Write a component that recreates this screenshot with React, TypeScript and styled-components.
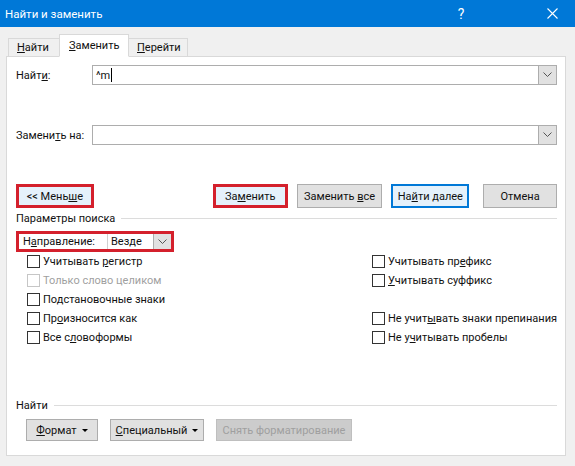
import React from 'react';
import styled, { createGlobalStyle } from 'styled-components';

const GlobalStyle = createGlobalStyle`
  html, body {
    margin: 0;
    padding: 0;
    background: #f0f0f0;
  }
  body {
    font-family: 'Segoe UI', Roboto, 'Noto Sans', sans-serif;
    font-size: 11px;
    color: #111;
  }
`;

const Window = styled.div`
  width: 575px;
  height: 466px;
  background: #f0f0f0;
  display: flex;
  flex-direction: column;
  overflow: hidden;
`;

const TitleBar = styled.div`
  height: 27px;
  background: #0078d7;
  color: #fff;
  display: flex;
  align-items: center;
  padding-left: 5px;
  font-size: 11.5px;
`;

const Title = styled.div`
  flex: 1;
`;

const TitleButton = styled.div<{ $gap?: number }>`
  width: 46px;
  height: 27px;
  display: flex;
  align-items: center;
  justify-content: center;
  font-size: 14px;
  color: #fff;
  margin-right: ${(p) => p.$gap ?? 0}px;
`;

const Body = styled.div`
  flex: 1;
  padding: 6px 9px 10px 6px;
  display: flex;
  flex-direction: column;
`;

const TabRow = styled.div`
  display: flex;
  align-items: flex-end;
  height: 23px;
  padding-left: 2px;
  position: relative;
  z-index: 1;
`;

const Tab = styled.div<{ $active?: boolean; $w: number }>`
  width: ${(p) => p.$w}px;
  height: ${(p) => (p.$active ? '23px' : '19px')};
  padding-left: ${(p) => (p.$active ? '9px' : '8px')};
  display: flex;
  align-items: center;
  border: 1px solid #d9d9d9;
  border-bottom: 1px solid ${(p) => (p.$active ? '#fff' : '#d9d9d9')};
  background: ${(p) => (p.$active ? '#fff' : '#f0f0f0')};
  margin-bottom: -1px;
  box-sizing: border-box;
  ${(p) => (p.$active ? 'margin: 0 -1px -1px -1px; position: relative;' : '')}
`;

const Panel = styled.div`
  flex: 1;
  background: #fff;
  border: 1px solid #d9d9d9;
  padding: 8px 8px 0 9px;
  display: flex;
  flex-direction: column;
`;

const FieldRow = styled.div<{ $top: number }>`
  display: flex;
  align-items: center;
  margin-top: ${(p) => p.$top}px;
  height: 20px;
`;

const FieldLabel = styled.div`
  width: 76px;
  white-space: nowrap;
`;

const Combo = styled.div`
  flex: 1;
  height: 20px;
  box-sizing: border-box;
  border: 1px solid #adadad;
  display: flex;
  align-items: stretch;
`;

const ComboText = styled.div`
  flex: 1;
  padding-left: 3px;
  display: flex;
  align-items: center;
`;

const Caret = styled.span`
  display: inline-block;
  width: 1px;
  height: 14px;
  background: #000;
  margin-left: 1px;
`;

const ComboArrow = styled.div`
  width: 17px;
  background: #e1e1e1;
  border-left: 1px solid #adadad;
  display: flex;
  align-items: center;
  justify-content: center;
`;

const ButtonRow = styled.div`
  display: flex;
  align-items: center;
  margin-top: 39px;
  height: 24px;
`;

const Button = styled.div<{ $w: number; $mark?: 'red' | 'blue'; $disabled?: boolean; $h?: number }>`
  width: ${(p) => p.$w}px;
  height: ${(p) => p.$h ?? 24}px;
  box-sizing: border-box;
  display: flex;
  align-items: center;
  justify-content: center;
  background: ${(p) =>
    p.$disabled ? '#cccccc' : p.$mark ? '#e5f1fb' : '#e1e1e1'};
  color: ${(p) => (p.$disabled ? '#9f9f9f' : '#111')};
  border: ${(p) =>
    p.$mark === 'red'
      ? '3px solid #d4202c'
      : p.$mark === 'blue'
      ? '2px solid #0078d7'
      : p.$disabled
      ? '1px solid #bfbfbf'
      : '1px solid #adadad'};
  white-space: nowrap;
`;

const Spacer = styled.div<{ $w: number }>`
  width: ${(p) => p.$w}px;
  flex: none;
`;

const SectionTitle = styled.div<{ $top: number }>`
  display: flex;
  align-items: center;
  margin-top: ${(p) => p.$top}px;
  height: 16px;
  &::after {
    content: '';
    flex: 1;
    height: 1px;
    background: #dcdcdc;
    margin-left: 6px;
  }
`;

const DirectionBox = styled.div`
  margin-top: 5px;
  width: 158px;
  height: 21px;
  box-sizing: border-box;
  border: 3px solid #d4202c;
  display: flex;
  align-items: center;
`;

const DirectionLabel = styled.div`
  width: 84px;
  padding-left: 4px;
  white-space: nowrap;
`;

const DirectionSelect = styled.div`
  flex: 1;
  height: 15px;
  display: flex;
  align-items: stretch;
  border-left: 1px solid #d0d0d0;
`;

const OptionsGrid = styled.div`
  margin-top: 0;
  display: grid;
  grid-template-columns: 345px 1fr;
  grid-auto-rows: 19px;
  padding-left: 11px;
`;

const Check = styled.div<{ $disabled?: boolean }>`
  display: flex;
  align-items: center;
  color: ${(p) => (p.$disabled ? '#9f9f9f' : '#111')};
  white-space: nowrap;
`;

const Box = styled.span<{ $disabled?: boolean }>`
  width: 13px;
  height: 13px;
  box-sizing: border-box;
  border: 1px solid ${(p) => (p.$disabled ? '#c6c6c6' : '#333')};
  background: #fff;
  margin-right: 3px;
  flex: none;
`;

const BottomRow = styled.div`
  display: flex;
  align-items: center;
  margin-top: 6px;
  padding-left: 10px;
  height: 22px;
`;

const SmallArrow = styled.span`
  display: inline-block;
  width: 0;
  height: 0;
  border-left: 3px solid transparent;
  border-right: 3px solid transparent;
  border-top: 3px solid #000;
  margin-left: 5px;
`;

const Chevron = () => (
  <svg width="9" height="6" viewBox="0 0 9 6">
    <path d="M0.5 0.5 L4.5 4.5 L8.5 0.5" fill="none" stroke="#555" strokeWidth="1" />
  </svg>
);

const CloseIcon = () => (
  <svg width="11" height="11" viewBox="0 0 11 11">
    <path d="M0.5 0.5 L10.5 10.5 M10.5 0.5 L0.5 10.5" stroke="#fff" strokeWidth="1.1" />
  </svg>
);

const options: [React.ReactNode, React.ReactNode][] = [
  [<>Учитывать <u>р</u>егистр</>, <>Учитывать пр<u>е</u>фикс</>],
  [<>Только слово целиком</>, <><u>У</u>читывать суффикс</>],
  [<>По<u>д</u>становочные знаки</>, null],
  [<>Пр<u>о</u>износится как</>, <>Не учит<u>ы</u>вать знаки препинания</>],
  [<>Все с<u>л</u>овоформы</>, <>Не у<u>ч</u>итывать пробелы</>],
];

const App = () => {
  return (
    <Window>
      <GlobalStyle />
      <TitleBar>
        <Title>Найти и заменить</Title>
        <TitleButton $gap={45}>?</TitleButton>
        <TitleButton>
          <CloseIcon />
        </TitleButton>
      </TitleBar>
      <Body>
        <TabRow>
          <Tab $w={52}>
            <span>
              <u>Н</u>айти
            </span>
          </Tab>
          <Tab $w={70} $active>
            <span>
              <u>З</u>аменить
            </span>
          </Tab>
          <Tab $w={60}>
            <span>
              <u>П</u>ерейти
            </span>
          </Tab>
        </TabRow>
        <Panel>
          <FieldRow $top={0}>
            <FieldLabel>
              Найт<u>и</u>:
            </FieldLabel>
            <Combo>
              <ComboText>
                <span>^m</span>
                <Caret />
              </ComboText>
              <ComboArrow>
                <Chevron />
              </ComboArrow>
            </Combo>
          </FieldRow>
          <FieldRow $top={40}>
            <FieldLabel>
              Замени<u>т</u>ь на:
            </FieldLabel>
            <Combo>
              <ComboText />
              <ComboArrow>
                <Chevron />
              </ComboArrow>
            </Combo>
          </FieldRow>
          <ButtonRow>
            <Button $w={78} $mark="red">
              <span>
                &lt;&lt; Мень<u>ш</u>е
              </span>
            </Button>
            <Spacer $w={119} />
            <Button $w={75} $mark="red">
              <span>
                За<u>м</u>енить
              </span>
            </Button>
            <Spacer $w={9} />
            <Button $w={86}>
              <span>
                Заменить <u>в</u>се
              </span>
            </Button>
            <Spacer $w={9} />
            <Button $w={78} $mark="blue">
              <span>
                На<u>й</u>ти далее
              </span>
            </Button>
            <Spacer $w={14} />
            <Button $w={74}>
              <span>Отмена</span>
            </Button>
          </ButtonRow>
          <SectionTitle $top={2}>Параметры поиска</SectionTitle>
          <DirectionBox>
            <DirectionLabel>
              Н<u>а</u>правление:
            </DirectionLabel>
            <DirectionSelect>
              <ComboText>Везде</ComboText>
              <ComboArrow>
                <Chevron />
              </ComboArrow>
            </DirectionSelect>
          </DirectionBox>
          <OptionsGrid>
            {options.map(([l, r], i) => (
              <React.Fragment key={i}>
                <Check $disabled={i === 1}>
                  <Box $disabled={i === 1} />
                  <span>{l}</span>
                </Check>
                {r ? (
                  <Check>
                    <Box />
                    <span>{r}</span>
                  </Check>
                ) : (
                  <div />
                )}
              </React.Fragment>
            ))}
          </OptionsGrid>
          <SectionTitle $top={50}>Найти</SectionTitle>
          <BottomRow>
            <Button $w={72} $h={22}>
              <span>
                <u>Ф</u>ормат
              </span>
              <SmallArrow />
            </Button>
            <Spacer $w={12} />
            <Button $w={94} $h={22}>
              <span>
                <u>С</u>пециальный
              </span>
              <SmallArrow />
            </Button>
            <Spacer $w={12} />
            <Button $w={136} $h={22} $disabled>
              <span>Снять форматирование</span>
            </Button>
          </BottomRow>
        </Panel>
      </Body>
    </Window>
  );
};

export default App;
